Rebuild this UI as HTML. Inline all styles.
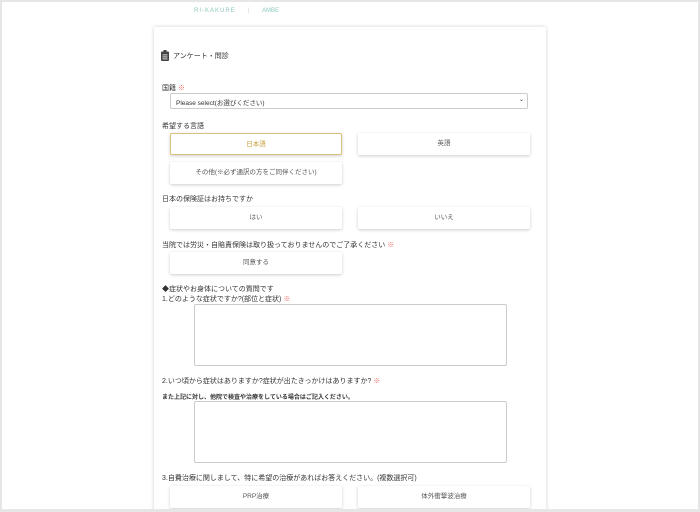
<!DOCTYPE html>
<html><head><meta charset="utf-8"><style>
*{margin:0;padding:0;box-sizing:border-box}
html,body{width:700px;height:512px;overflow:hidden}
body{background:#fff;position:relative;font-family:"Liberation Sans","Noto Sans CJK JP",sans-serif;color:#333;font-size:7px}
.frame{position:absolute;left:0;top:0;width:700px;height:512px;border:2px solid #e6e6e6;border-bottom-width:3px;z-index:5;pointer-events:none}
.a{position:absolute;white-space:nowrap}
.card{position:absolute;left:154px;top:27px;width:392px;height:500px;background:#fff;box-shadow:0 0 4px rgba(0,0,0,.18);border-radius:2px}
.btn{position:absolute;height:22px;background:#fff;box-shadow:0 1px 3px rgba(0,0,0,.2);border-radius:2px;text-align:center;line-height:22px;font-size:6.5px;color:#555}
.ta{position:absolute;border:1px solid #ccc;border-radius:2px;background:#fff}
.r{color:#e66}
</style></head><body>
<div class="frame"></div>
<div class="a" style="left:194px;top:8px;font-size:6px;color:#8cc9bd;letter-spacing:1px">RI-KAKURE</div>
<div class="a" style="left:248px;top:8px;font-size:6px;color:#ccc">|</div>
<div class="a" style="left:262px;top:8px;font-size:6px;color:#8cc9bd">AMBE</div>
<div class="card"></div>
<svg class="a" style="left:161px;top:50px" width="8" height="11" viewBox="0 0 8 11"><rect x="0" y="1.5" width="8" height="9.5" rx="1" fill="#444"/><rect x="2.5" y="0" width="3" height="2.5" fill="#444"/><rect x="1.5" y="4.5" width="5" height="0.8" fill="#fff"/><rect x="1.5" y="6.5" width="5" height="0.8" fill="#fff"/><rect x="1.5" y="8.5" width="5" height="0.8" fill="#fff"/></svg>
<div class="a" style="left:173px;top:51px">アンケート・問診</div>
<div class="a" style="left:162px;top:83px">国籍 <span class="r">※</span></div>
<div class="a" style="left:170px;top:93px;width:358px;height:16px;border:1px solid #ccc;border-radius:2px;padding:3px 5px;font-size:6.5px">Please select(お選びください)<span style="position:absolute;right:3px;top:2px;font-size:6px">⌄</span></div>
<div class="a" style="left:162px;top:121px">希望する言語</div>
<div class="btn" style="left:170px;top:133px;width:172px;border:1px solid #d8c27a;color:#c9a040">日本語</div>
<div class="btn" style="left:358px;top:133px;width:172px">英語</div>
<div class="btn" style="left:170px;top:162px;width:172px">その他(※必ず通訳の方をご同伴ください)</div>
<div class="a" style="left:162px;top:194px">日本の保険証はお持ちですか</div>
<div class="btn" style="left:170px;top:207px;width:172px">はい</div>
<div class="btn" style="left:358px;top:207px;width:172px">いいえ</div>
<div class="a" style="left:162px;top:240px">当院では労災・自賠責保険は取り扱っておりませんのでご了承ください <span class="r">※</span></div>
<div class="btn" style="left:170px;top:252px;width:172px">同意する</div>
<div class="a" style="left:162px;top:284px">◆症状やお身体についての質問です</div>
<div class="a" style="left:162px;top:294px">1.どのような症状ですか?(部位と症状) <span class="r">※</span></div>
<div class="ta" style="left:194px;top:304px;width:313px;height:62px"></div>
<div class="a" style="left:162px;top:376px">2.いつ頃から症状はありますか?症状が出たきっかけはありますか? <span class="r">※</span></div>
<div class="a" style="left:162px;top:392px;font-size:6px;font-weight:bold">また上記に対し、他院で検査や治療をしている場合はご記入ください。</div>
<div class="ta" style="left:194px;top:401px;width:313px;height:62px"></div>
<div class="a" style="left:162px;top:473px">3.自費治療に関しまして、特に希望の治療があればお答えください。(複数選択可)</div>
<div class="btn" style="left:170px;top:486px;width:172px">PRP治療</div>
<div class="btn" style="left:358px;top:486px;width:172px">体外衝撃波治療</div>
</body></html>
